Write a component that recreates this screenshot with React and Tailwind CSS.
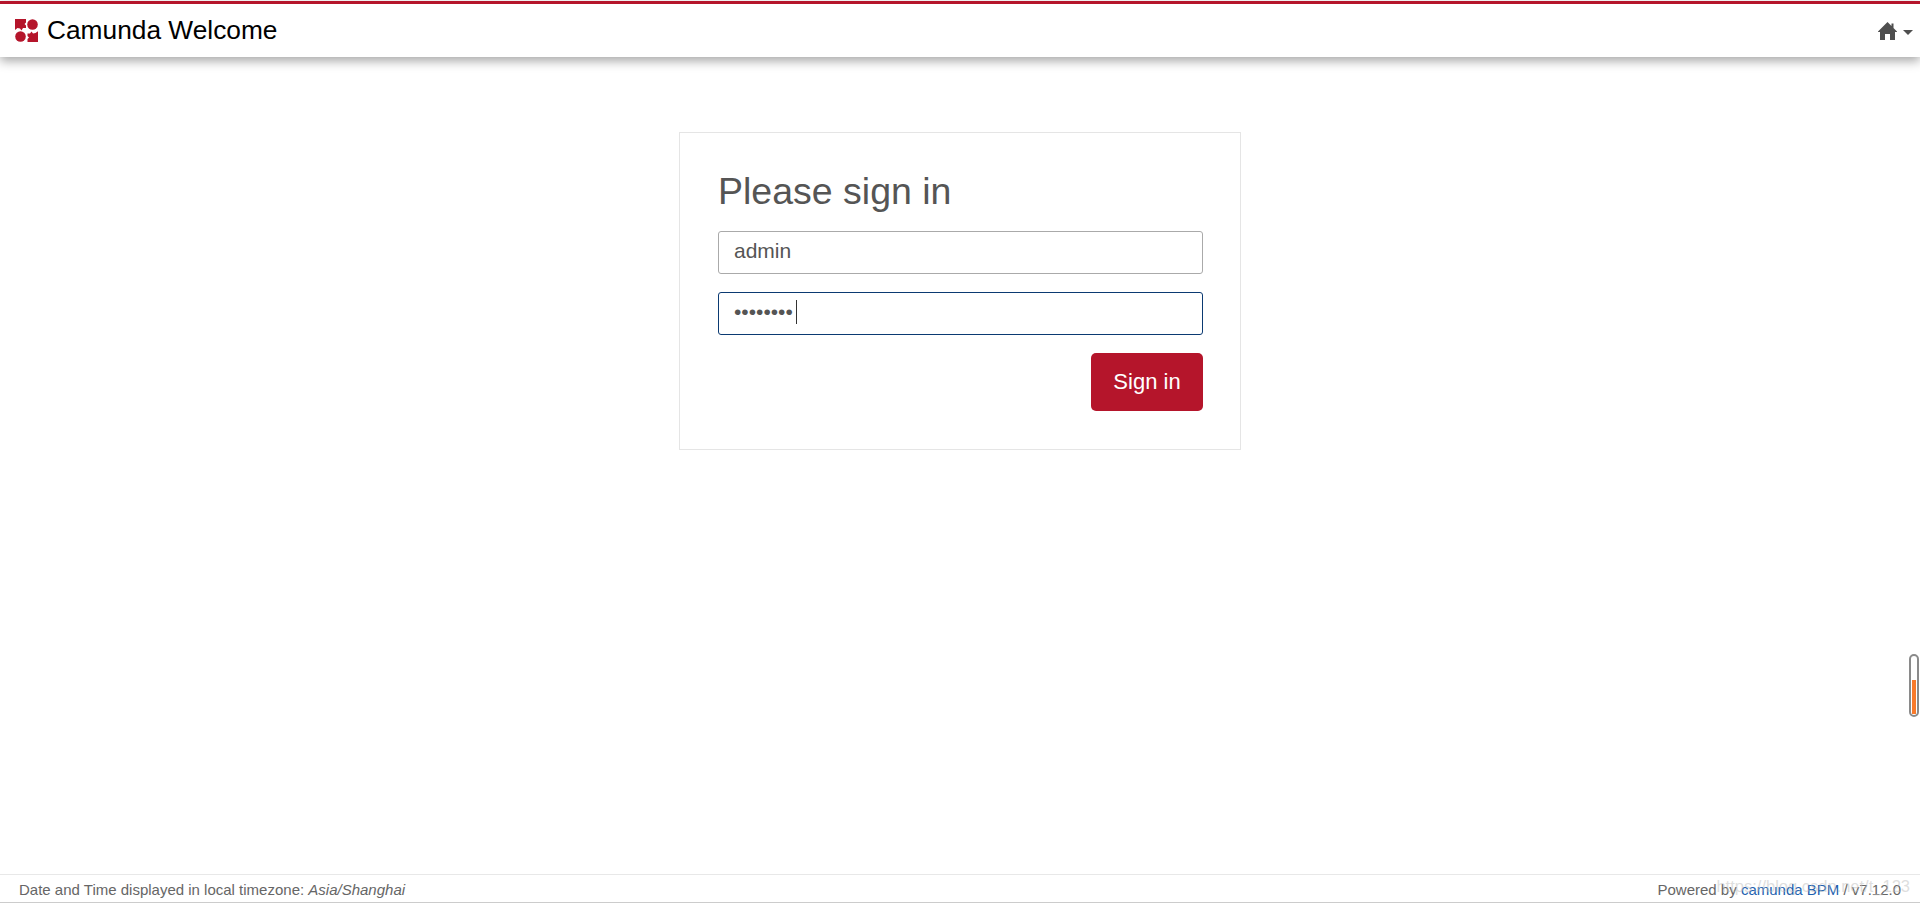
const sans = "font-['Liberation_Sans',Arial,sans-serif]";

function Logo() {
  return (
    <svg width="23" height="23" viewBox="0 0 23 23" className="shrink-0">
      <path d="M0 0h11v3.500l-1.500 1.500 1.500 1.500v2.500H8l-1.500 2.500L5 9.500 2.500 9 0 11z" fill="#b5152b" />
      <circle cx="17.500" cy="5.500" r="5.300" fill="#b5152b" />
      <circle cx="5.500" cy="17.500" r="5.300" fill="#b5152b" />
      <path d="M12.500 14.500h2.500l1.500-2 1.500 2 2.500-.5 3-2v11H12.500v-3l1.500-1.500-1.500-1.500z" fill="#b5152b" />
    </svg>
  );
}

function HomeIcon() {
  return (
    <svg width="19" height="18" viewBox="0 0 19 18">
      <path d="M9.500 0l4 4V1.500h2V6l3.500 3.500v.5h-2v8H12v-6H7v6H2v-8H0v-.5z" fill="#4f4f4f" />
    </svg>
  );
}

function Field({ value, type, focused }) {
  return (
    <input
      readOnly
      type={type}
      value={value}
      className={`h-[43px] w-full rounded-[3px] border bg-white px-[15px] pb-[3px] text-[21px] text-[#555] outline-none ${
        focused ? "border-[#0b3a72]" : "border-[#aaaaaa]"
      }`}
    />
  );
}

export default function App() {
  return (
    <div className={`relative flex h-[903px] flex-col overflow-hidden bg-white ${sans}`}>
      <header className="z-10 mt-px flex h-[56px] items-center justify-between border-t-[3px] border-[#b5152b] bg-white pl-[15px] pr-[7px] shadow-[0_4px_10px_rgba(0,0,0,0.35)]">
        <div className="flex items-center gap-[9px]">
          <Logo />
          <span className="text-[26.300px] text-black">Camunda Welcome</span>
        </div>
        <div className="flex items-center gap-[6px]">
          <HomeIcon />
          <span className="mt-[3px] h-0 w-0 border-x-[5px] border-t-[5px] border-x-transparent border-t-[#4f4f4f]" />
        </div>
      </header>

      <main className="flex flex-1 justify-center pt-[75px]">
        <div className="h-[318px] w-[562px] border border-[#e5e5e5] pl-[38px] pr-[37px] pt-[37px]">
          <h2 className="text-[37.500px] leading-[42px] text-[#555]">Please sign in</h2>
          <div className="mt-[19px] flex flex-col gap-[18px]">
            <Field value="admin" type="text" />
            <div className="relative">
              <Field value="12345678" type="password" focused />
              <span className="absolute left-[78px] top-[8px] h-[24px] w-px bg-[#333]" />
            </div>
          </div>
          <div className="mt-[18px] flex justify-end">
            <button
              type="button"
              className="h-[58px] w-[112px] rounded-[5px] bg-[#b5152b] pb-[2px] text-[22px] text-white"
            >
              Sign in
            </button>
          </div>
        </div>
      </main>

      <footer className="flex h-[29px] items-center justify-between border-b border-t border-[#e8e8e8] border-b-[#cccccc] px-[19px] pt-[3px] text-[15px] text-[#666]">
        <div>
          Date and Time displayed in local timezone: <em>Asia/Shanghai</em>
        </div>
        <div>
          Powered by <span className="text-[#1c5fb0]">camunda BPM</span> / v7.12.0
        </div>
      </footer>

      <span className="absolute bottom-[4px] right-[10px] whitespace-nowrap text-[16.500px] text-[#bdbdbd]/50">
        https://blog.csdn.net/t_123
      </span>

      <div className="absolute right-px top-[654px] flex h-[63px] w-[10px] items-end rounded-full border-2 border-[#8a8a8a] bg-white p-px">
        <div className="h-[34px] w-full bg-[#f97a2b]" />
      </div>
    </div>
  );
}
